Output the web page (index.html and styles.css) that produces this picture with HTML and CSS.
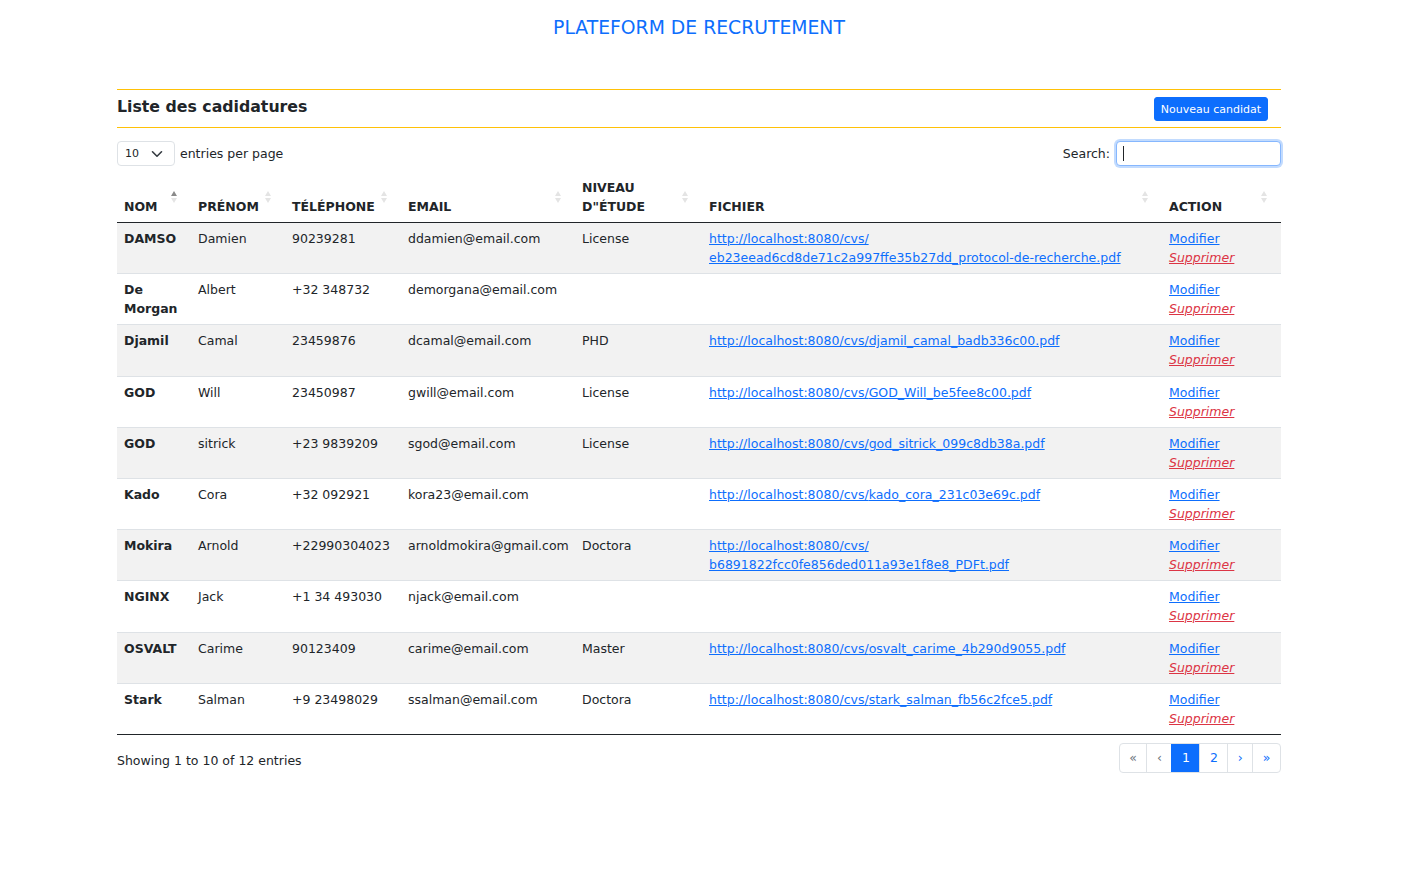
FILE: index.html
```html
<!DOCTYPE html>
<html lang="fr">
<head>
<meta charset="utf-8">
<title>Plateform de recrutement</title>
<link rel="stylesheet" href="styles.css">
</head>
<body>
<div class="page">
  <h1 class="site-title">PLATEFORM DE RECRUTEMENT</h1>
  <div class="container">
    <div class="card-head">
      <h2 class="card-title">Liste des cadidatures</h2>
      <button class="btn-new">Nouveau candidat</button>
    </div>

    <div class="controls">
      <div class="length">
        <div class="select-wrap">
          <select class="select"><option>10</option></select>
          <svg class="chev" width="12" height="8" viewBox="0 0 12 8"><path d="M1.5 1.8 L6 6.2 L10.5 1.8" fill="none" stroke="#343a40" stroke-width="1.6" stroke-linecap="round" stroke-linejoin="round"/></svg>
        </div>
        <span class="label">entries per page</span>
      </div>
      <div class="search">
        <span class="label">Search:</span>
        <div class="input-wrap">
          <input class="input" type="search">
          <span class="caret"></span>
        </div>
      </div>
    </div>

    <table class="table">
      <colgroup>
        <col class="c-nom"><col class="c-prenom"><col class="c-tel"><col class="c-email"><col class="c-niv"><col class="c-fich"><col class="c-act">
      </colgroup>
      <thead>
        <tr>
          <th class="sort asc">NOM</th>
          <th class="sort">PRÉNOM</th>
          <th class="sort">TÉLÉPHONE</th>
          <th class="sort">EMAIL</th>
          <th class="sort">NIVEAU D"ÉTUDE</th>
          <th class="sort">FICHIER</th>
          <th class="sort">ACTION</th>
        </tr>
      </thead>
      <tbody>
        <tr>
          <td class="name">DAMSO</td><td>Damien</td><td>90239281</td><td>ddamien@email.com</td><td>License</td>
          <td><a href="#">http://localhost:8080/cvs/<wbr>eb23eead6cd8de71c2a997ffe35b27dd_protocol-de-recherche.pdf</a></td>
          <td><a href="#">Modifier</a><br><a href="#" class="del">Supprimer</a></td>
        </tr>
        <tr>
          <td class="name">De Morgan</td><td>Albert</td><td>+32 348732</td><td>demorgana@email.com</td><td></td>
          <td></td>
          <td><a href="#">Modifier</a><br><a href="#" class="del">Supprimer</a></td>
        </tr>
        <tr>
          <td class="name">Djamil</td><td>Camal</td><td>23459876</td><td>dcamal@email.com</td><td>PHD</td>
          <td><a href="#">http://localhost:8080/cvs/<wbr>djamil_camal_badb336c00.pdf</a></td>
          <td><a href="#">Modifier</a><br><a href="#" class="del">Supprimer</a></td>
        </tr>
        <tr>
          <td class="name">GOD</td><td>Will</td><td>23450987</td><td>gwill@email.com</td><td>License</td>
          <td><a href="#">http://localhost:8080/cvs/<wbr>GOD_Will_be5fee8c00.pdf</a></td>
          <td><a href="#">Modifier</a><br><a href="#" class="del">Supprimer</a></td>
        </tr>
        <tr>
          <td class="name">GOD</td><td>sitrick</td><td>+23 9839209</td><td>sgod@email.com</td><td>License</td>
          <td><a href="#">http://localhost:8080/cvs/<wbr>god_sitrick_099c8db38a.pdf</a></td>
          <td><a href="#">Modifier</a><br><a href="#" class="del">Supprimer</a></td>
        </tr>
        <tr>
          <td class="name">Kado</td><td>Cora</td><td>+32 092921</td><td>kora23@email.com</td><td></td>
          <td><a href="#">http://localhost:8080/cvs/<wbr>kado_cora_231c03e69c.pdf</a></td>
          <td><a href="#">Modifier</a><br><a href="#" class="del">Supprimer</a></td>
        </tr>
        <tr>
          <td class="name">Mokira</td><td>Arnold</td><td>+22990304023</td><td>arnoldmokira@gmail.com</td><td>Doctora</td>
          <td><a href="#">http://localhost:8080/cvs/<wbr>b6891822fcc0fe856ded011a93e1f8e8_PDFt.pdf</a></td>
          <td><a href="#">Modifier</a><br><a href="#" class="del">Supprimer</a></td>
        </tr>
        <tr>
          <td class="name">NGINX</td><td>Jack</td><td>+1 34 493030</td><td>njack@email.com</td><td></td>
          <td></td>
          <td><a href="#">Modifier</a><br><a href="#" class="del">Supprimer</a></td>
        </tr>
        <tr>
          <td class="name">OSVALT</td><td>Carime</td><td>90123409</td><td>carime@email.com</td><td>Master</td>
          <td><a href="#">http://localhost:8080/cvs/<wbr>osvalt_carime_4b290d9055.pdf</a></td>
          <td><a href="#">Modifier</a><br><a href="#" class="del">Supprimer</a></td>
        </tr>
        <tr>
          <td class="name">Stark</td><td>Salman</td><td>+9 23498029</td><td>ssalman@email.com</td><td>Doctora</td>
          <td><a href="#">http://localhost:8080/cvs/<wbr>stark_salman_fb56c2fce5.pdf</a></td>
          <td><a href="#">Modifier</a><br><a href="#" class="del">Supprimer</a></td>
        </tr>
      </tbody>
    </table>

    <div class="footer">
      <div class="info">Showing 1 to 10 of 12 entries</div>
      <nav class="pager">
        <span class="pg disabled">«</span>
        <span class="pg disabled">‹</span>
        <span class="pg active">1</span>
        <span class="pg">2</span>
        <span class="pg">›</span>
        <span class="pg">»</span>
      </nav>
    </div>
  </div>
</div>
</body>
</html>
```

FILE: styles.css
```css
* { box-sizing: border-box; }

html, body {
  margin: 0;
  padding: 0;
  background: #fff;
}

body {
  font-family: "DejaVu Sans", sans-serif;
  color: #212529;
  font-size: 12.5px;
  line-height: 19px;
}

.page {
  width: 1398px;
}

.site-title {
  margin: 16px 0 0;
  text-align: center;
  font-weight: 400;
  font-size: 18.8px;
  line-height: 23px;
  color: #0d6efd;
}

.container {
  width: 1164px;
  margin: 50px auto 0;
}

.card-head {
  display: flex;
  justify-content: space-between;
  align-items: flex-start;
  border-top: 1px solid #ffc107;
  border-bottom: 1px solid #ffc107;
  padding: 7px 13px 6px 0;
}

.card-title {
  margin: 0;
  font-size: 15.75px;
  font-weight: 700;
  line-height: 19px;
}

.btn-new {
  font-family: "DejaVu Sans", sans-serif;
  font-size: 11px;
  line-height: 16px;
  color: #fff;
  background: #0d6efd;
  border: 1px solid #0d6efd;
  border-radius: 3px;
  padding: 4px 6px 2px;
  height: 24px;
  margin: 0;
}

.controls {
  display: flex;
  justify-content: space-between;
  align-items: center;
  margin-top: 13px;
}

.length, .search {
  display: flex;
  align-items: center;
}

.select-wrap {
  position: relative;
  width: 58px;
  height: 25px;
}

.select {
  -webkit-appearance: none;
  appearance: none;
  width: 58px;
  height: 25px;
  border: 1px solid #dee2e6;
  border-radius: 4px;
  background: #fff;
  font-family: "DejaVu Sans", sans-serif;
  font-size: 11px;
  color: #212529;
  padding: 0 0 0 7px;
}

.chev {
  position: absolute;
  right: 12px;
  top: 9px;
  pointer-events: none;
}

.length .label { margin-left: 5px; }
.search .label { margin-right: 6px; }

.input-wrap {
  position: relative;
  width: 165px;
  height: 25px;
}

.input {
  width: 165px;
  height: 25px;
  border: 1px solid #86b7fe;
  border-radius: 4px;
  box-shadow: 0 0 0 2px rgba(13, 110, 253, 0.25);
  outline: none;
  background: #fff;
  font-family: "DejaVu Sans", sans-serif;
  font-size: 12.5px;
  padding: 0 6px;
}

.caret {
  position: absolute;
  left: 7px;
  top: 5px;
  width: 1px;
  height: 15px;
  background: #212529;
}

.table {
  width: 100%;
  table-layout: fixed;
  border-collapse: collapse;
  margin-top: 6px;
}

.c-nom { width: 74px; }
.c-prenom { width: 94px; }
.c-tel { width: 116px; }
.c-email { width: 174px; }
.c-niv { width: 127px; }
.c-fich { width: 460px; }
.c-act { width: 119px; }

.table th {
  position: relative;
  text-align: left;
  vertical-align: bottom;
  font-weight: 700;
  padding: 6px 24px 6px 7px;
  border-bottom: 1px solid #212529;
}

.table td {
  vertical-align: top;
  padding: 6.1px 6px 6.1px 7px;
  border-bottom: 1px solid #dee2e6;
}

.table tbody tr:nth-child(odd) td {
  background: #f2f2f2;
}

.table tbody tr:last-child td {
  border-bottom: 1px solid #212529;
}

.table td.name { font-weight: 700; }

.sort::before,
.sort::after {
  content: "";
  position: absolute;
  right: 14px;
  width: 0;
  height: 0;
  border-left: 3.5px solid transparent;
  border-right: 3.5px solid transparent;
}

.sort::before {
  top: calc(50% - 6px);
  border-bottom: 5px solid #e4e4e4;
}

.sort::after {
  top: calc(50% + 1px);
  border-top: 5px solid #e4e4e4;
}

.sort.asc::before { border-bottom-color: #8a8a8a; }

a {
  color: #0d6efd;
  text-decoration: underline;
}

a.del {
  color: #dc3545;
  font-style: italic;
}

.footer {
  display: flex;
  justify-content: space-between;
  align-items: flex-start;
  margin-top: 8px;
}

.info {
  padding-top: 8px;
}

.pager {
  display: flex;
  border: 1px solid #dee2e6;
  border-radius: 4px;
  overflow: hidden;
  height: 30px;
}

.pg {
  display: flex;
  align-items: center;
  justify-content: center;
  min-width: 24px;
  padding: 0 9.5px;
  color: #0d6efd;
  border-left: 1px solid #dee2e6;
  font-size: 12.5px;
  line-height: 28px;
}

.pg:first-child { border-left: 0; }

.pg.disabled { color: #6c757d; }

.pg.active {
  background: #0d6efd;
  color: #fff;
  border-left-color: #0d6efd;
}
```
